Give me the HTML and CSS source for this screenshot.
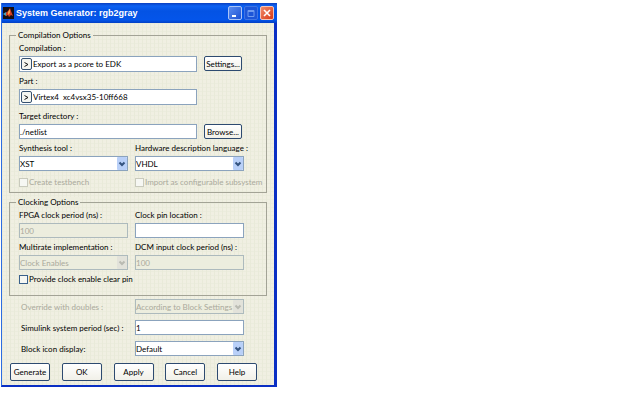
FILE: index.html
```html
<!DOCTYPE html>
<html lang="en">
<head>
<meta charset="utf-8">
<title>System Generator: rgb2gray</title>
<link rel="stylesheet" href="styles.css">
</head>
<body>
<main class="window">
  <header class="titlebar">
    <svg class="logo" viewBox="0 0 11 12" aria-hidden="true">
      <rect width="11" height="12" fill="#170e12"/>
      <path d="M0 7 3 5 5 7 3 9Z" fill="#4ba3bd"/>
      <path d="M3 6 5 4 7 1 8 4 10 9 8 8 6 10 5 8 3 9Z" fill="#d6401f"/>
      <path d="M5 5 7 2 7 6 5 8Z" fill="#f6a04a"/>
    </svg>
    <h1 class="title">System Generator: rgb2gray</h1>
    <div class="window-buttons">
      <button class="window-button" type="button" aria-label="Minimize">
        <svg viewBox="0 0 12 12"><path d="M3 8h4v2H3z" fill="#fff"/></svg>
      </button>
      <button class="window-button window-button-off" type="button" aria-label="Maximize" disabled>
        <svg viewBox="0 0 12 12"><path d="M3 3.5h6v6H3zM3 4.5h6" fill="none" stroke="#6f9bf0"/></svg>
      </button>
      <button class="window-button window-button-close" type="button" aria-label="Close">
        <svg viewBox="0 0 12 12"><path d="M3 3l6 6M9 3l-6 6" fill="none" stroke="#fff" stroke-width="1.6"/></svg>
      </button>
    </div>
  </header>

  <form class="body">
    <fieldset class="group">
      <legend>Compilation Options</legend>
      <div class="stack">
        <div class="field">
          <label for="compilation">Compilation :</label>
          <div class="line">
            <div class="picker">
              <button class="pick" type="button" aria-label="Choose compilation"><svg viewBox="0 0 9 9"><path d="M2.500 2.500 6 4.500 2.500 6.500" fill="none" stroke="#111"/></svg></button>
              <input id="compilation" type="text" value="Export as a pcore to EDK">
            </div>
            <button class="button button-small" type="button">Settings...</button>
          </div>
        </div>
        <div class="field">
          <label for="part">Part :</label>
          <div class="line">
            <div class="picker">
              <button class="pick" type="button" aria-label="Choose part"><svg viewBox="0 0 9 9"><path d="M2.500 2.500 6 4.500 2.500 6.500" fill="none" stroke="#111"/></svg></button>
              <input id="part" type="text" value="Virtex4  xc4vsx35-10ff668">
            </div>
          </div>
        </div>
        <div class="field">
          <label for="target">Target directory :</label>
          <div class="line">
            <input class="box" id="target" type="text" value="./netlist">
            <button class="button button-small" type="button">Browse...</button>
          </div>
        </div>
      </div>
      <div class="columns">
        <div class="field">
          <label for="synthesis">Synthesis tool :</label>
          <div class="select">
            <select class="box" id="synthesis"><option>XST</option></select>
            <svg class="arrow" viewBox="0 0 10 13"><rect width="10" height="13" rx="1"/><path d="M2.500 5.500 5 8 7.500 5.500"/></svg>
          </div>
        </div>
        <div class="field">
          <label for="language">Hardware description language :</label>
          <div class="select">
            <select class="box" id="language"><option>VHDL</option></select>
            <svg class="arrow" viewBox="0 0 10 13"><rect width="10" height="13" rx="1"/><path d="M2.500 5.500 5 8 7.500 5.500"/></svg>
          </div>
        </div>
      </div>
      <div class="columns checks">
        <label class="check off"><input type="checkbox" disabled>Create testbench</label>
        <label class="check off"><input type="checkbox" disabled>Import as configurable subsystem</label>
      </div>
    </fieldset>

    <fieldset class="group group-clocking">
      <legend>Clocking Options</legend>
      <div class="columns">
        <div class="field">
          <label for="fpga">FPGA clock period (ns) :</label>
          <input class="box" id="fpga" type="text" value="100" disabled>
        </div>
        <div class="field">
          <label for="pin">Clock pin location :</label>
          <input class="box" id="pin" type="text">
        </div>
        <div class="field">
          <label for="multirate">Multirate implementation :</label>
          <div class="select">
            <select class="box" id="multirate" disabled><option>Clock Enables</option></select>
            <svg class="arrow arrow-off" viewBox="0 0 10 13"><rect width="10" height="13" rx="1"/><path d="M2.500 5.500 5 8 7.500 5.500"/></svg>
          </div>
        </div>
        <div class="field">
          <label for="dcm">DCM input clock period (ns) :</label>
          <input class="box" id="dcm" type="text" value="100" disabled>
        </div>
        <label class="check check-wide"><input type="checkbox">Provide clock enable clear pin</label>
      </div>
    </fieldset>

    <div class="settings">
      <label class="off" for="override">Override with doubles :</label>
      <div class="select">
        <select class="box" id="override" disabled><option>According to Block Settings</option></select>
        <svg class="arrow arrow-off" viewBox="0 0 10 13"><rect width="10" height="13" rx="1"/><path d="M2.500 5.500 5 8 7.500 5.500"/></svg>
      </div>
      <label for="period">Simulink system period (sec) :</label>
      <input class="box" id="period" type="text" value="1">
      <label for="display">Block icon display:</label>
      <div class="select">
        <select class="box" id="display"><option>Default</option></select>
        <svg class="arrow" viewBox="0 0 10 13"><rect width="10" height="13" rx="1"/><path d="M2.500 5.500 5 8 7.500 5.500"/></svg>
      </div>
    </div>

    <div class="actions">
      <button class="button" type="button">Generate</button>
      <button class="button" type="button">OK</button>
      <button class="button" type="button">Apply</button>
      <button class="button" type="button">Cancel</button>
      <button class="button" type="button">Help</button>
    </div>
  </form>
</main>
</body>
</html>
```
FILE: styles.css
```css
* {
  box-sizing: border-box;
}

body {
  margin: 0;
  padding: 3px 1px;
  background: #fff;
  color: #000;
  font: 8px/10px Lato, "Liberation Sans", Arial, sans-serif;
}

button,
input,
select {
  margin: 0;
  padding: 0;
  color: inherit;
  font: inherit;
}

svg {
  display: block;
}

.window {
  max-width: 276px;
  border: solid #0a2fc4;
  border-width: 0 3px 2px 1px;
  border-left-color: #2d6ce0;
  background-color: #f0efe2;
  background-image:
    linear-gradient(90deg, #e9ead9 1px, transparent 1px),
    linear-gradient(#ebecdd 1px, transparent 1px);
  background-size: 4px 4px;
}

.titlebar {
  display: flex;
  align-items: center;
  height: 20px;
  margin-right: -3px;
  padding: 0 3px 0 1px;
  background: linear-gradient(#0a3fc0, #0d62f2 3px, #0453e4 8px, #0455ea 17px, #0340c4);
}

.logo {
  width: 11px;
  height: 12px;
}

.title {
  flex: 1;
  margin: 0 0 0 2px;
  color: #fff;
  font: bold 9px/12px "Liberation Sans", Arial, sans-serif;
  white-space: nowrap;
}

.window-buttons {
  display: flex;
  gap: 2px;
}

.window-button {
  width: 14px;
  height: 14px;
  border: 1px solid #a9c4f7;
  border-radius: 2px;
  background: linear-gradient(135deg, #5b8df0, #1f52d3);
}

.window-button-off {
  border-color: #3f74e4;
  background: #1c55d8;
}

.window-button-close {
  border-color: #f4c4b8;
  background: linear-gradient(135deg, #f08a6a, #d93a17);
}

.body {
  padding: 7px 7px 4px;
}

.group {
  min-width: 0;
  margin: 0;
  padding: 3px 22px 5px 9px;
  border: 1px solid #a3a396;
}

.group-clocking {
  margin-top: 4px;
  padding-bottom: 11px;
}

legend {
  margin-left: -3px;
  padding: 0 2px;
  background: #eeeedf;
}

.stack {
  display: grid;
  gap: 4px;
}

.field {
  display: grid;
  grid-template-columns: minmax(0, 1fr);
  gap: 3px;
  min-width: 0;
}

.stack .field:last-child {
  margin-top: 2px;
}

label {
  white-space: nowrap;
}

.line {
  display: grid;
  grid-template-columns: 1fr 38px;
  gap: 7px;
  margin-right: 2px;
}

.picker,
.box {
  width: 100%;
  height: 15px;
  min-width: 0;
  border: 1px solid #8ba3bd;
  border-radius: 0;
  background: #fff;
}

.picker {
  display: flex;
  align-items: center;
  height: 16px;
  padding-left: 1px;
}

.picker input {
  flex: 1;
  min-width: 0;
  padding-left: 1px;
  border: 0;
  background: none;
}

.pick {
  width: 11px;
  height: 12px;
  border: 1px solid #35506f;
  border-radius: 2px;
  background: #f4f5f0;
}

.box:disabled {
  border-color: #adbabd;
  background: #ecedde;
  color: #aaa99c;
  opacity: 1;
}

.select {
  position: relative;
}

.select .box {
  display: block;
  appearance: none;
}

.arrow {
  position: absolute;
  top: 1px;
  right: 1px;
  width: 10px;
  height: 13px;
  fill: #b9d0f8;
  stroke: none;
  pointer-events: none;
}

.arrow path {
  fill: none;
  stroke: #34537f;
  stroke-width: 2;
}

.arrow-off {
  fill: #e2e2da;
}

.arrow-off path {
  stroke: #b9bab2;
}

.columns {
  display: grid;
  grid-template-columns: repeat(2, minmax(0, 1fr));
  gap: 4px 7px;
}

.stack + .columns {
  margin-top: 4px;
}

.checks {
  margin-top: 6px;
}

.check {
  display: flex;
  align-items: center;
  gap: 1px;
}

.check input {
  appearance: none;
  flex: none;
  width: 9px;
  height: 9px;
  border: 1px solid #3a618c;
  background: #f6f7f3;
}

.check input:disabled {
  border-color: #c9cabd;
}

.check-wide {
  grid-column: 1 / -1;
}

.off {
  color: #aaa99c;
}

.settings {
  display: grid;
  grid-template-columns: repeat(2, minmax(0, 1fr));
  align-items: center;
  gap: 6px 7px;
  margin: 3px 23px 0 10px;
}

.settings label {
  padding-left: 2px;
}

.actions {
  display: grid;
  grid-template-columns: repeat(5, 40px);
  justify-content: space-between;
  margin: 7px 10px 0 1px;
}

.button {
  height: 18px;
  border: 1px solid #2d4a70;
  border-radius: 2px;
  background: linear-gradient(#fff, #f1f0e8);
  text-align: center;
  white-space: nowrap;
}

.button-small {
  height: 15px;
}
```
